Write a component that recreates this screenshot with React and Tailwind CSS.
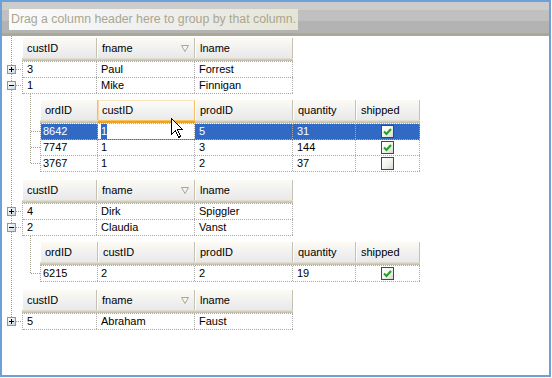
import React from 'react'

const dot = 'border-dotted border-[#a9a9a9]'

const parentCols = [
  { label: 'custID', hw: 'w-[75px]', dw: 'w-[74px]' },
  { label: 'fname', hw: 'w-[98px]', dw: 'w-[98px]', filter: true },
  { label: 'lname', hw: 'w-[98px]', dw: 'w-[98px]' },
]

const childCols = [
  { label: 'ordID', hw: 'w-[58px]', dw: 'w-[57px]' },
  { label: 'custID', hw: 'w-[97px]', dw: 'w-[97px]' },
  { label: 'prodID', hw: 'w-[98px]', dw: 'w-[98px]' },
  { label: 'quantity', hw: 'w-[63px]', dw: 'w-[63px]' },
  { label: 'shipped', hw: 'w-[64px]', dw: 'w-[64px]' },
]

function FilterIcon() {
  return (
    <svg width="8" height="7" viewBox="0 0 8 7">
      <polygon points="0.5,0.5 7.5,0.5 4,6.5" fill="#f6f5ee" stroke="#aba78f" strokeWidth="1" />
    </svg>
  )
}

function HeaderCell({ col, hot }) {
  if (hot) {
    return (
      <div className={`${col.hw} flex h-[23px] flex-col`}>
        <div className="flex flex-1 items-center border-x border-t border-l-[#fcd9a2] border-r-[#f6bf66] border-t-[#fde6bd] bg-linear-to-b from-[#fdfcf8] via-[#f2f2f2] to-[#eaeaea] pl-[3px]">
          {col.label}
        </div>
        <div className="h-px bg-[#fbc35c]" />
        <div className="h-[2px] bg-[#f1a224]" />
      </div>
    )
  }
  return (
    <div className={`${col.hw} flex h-[23px] flex-col`}>
      <div className="flex flex-1 items-center justify-between border-x border-l-white border-r-[#c5c2b1] bg-linear-to-b from-[#fcfbf3] via-[#f1f1f1] to-[#e9e9e9] pl-[4px] pr-[5px]">
        <span>{col.label}</span>
        {col.filter ? <FilterIcon /> : null}
      </div>
      <div className="h-px bg-[#e0ddcf]" />
      <div className="h-px bg-[#d1cebe]" />
      <div className="h-px bg-[#c4c1b0]" />
    </div>
  )
}

function Check({ on }) {
  return (
    <div className="flex h-[13px] w-[13px] items-center justify-center border border-[#1c5180] bg-linear-to-br from-white via-[#f3f3f0] to-[#d8d8d2]">
      {on ? (
        <svg width="11" height="11" viewBox="0 0 11 11">
          <polyline points="2,5.5 4.5,8 9,3" fill="none" stroke="#21a121" strokeWidth="2" />
        </svg>
      ) : null}
    </div>
  )
}

function ParentBand({ rows, className = '' }) {
  return (
    <div className={`ml-[20px] flex flex-col ${className}`}>
      <div className="flex">
        {parentCols.map((c) => (
          <HeaderCell key={c.label} col={c} />
        ))}
      </div>
      <div className={`w-fit border-l border-t ${dot}`}>
        {rows.map((r, i) => (
          <div key={i} className={`flex h-[16px] border-b ${dot}`}>
            {r.map((v, j) => (
              <div key={j} className={`${parentCols[j].dw} border-r ${dot} pl-[4px] leading-[15px]`}>
                {v}
              </div>
            ))}
          </div>
        ))}
      </div>
    </div>
  )
}

function ChildBand({ rows, hot = -1, className = '' }) {
  return (
    <div className={`ml-[38px] flex flex-col ${className}`}>
      <div className="flex">
        {childCols.map((c, i) => (
          <HeaderCell key={c.label} col={c} hot={i === hot} />
        ))}
      </div>
      <div className={`w-fit border-l border-t ${dot}`}>
        {rows.map((r, i) => {
          const sel = r.selected
          return (
            <div
              key={i}
              className={`flex h-[16px] border-b ${dot} ${sel ? 'bg-[#316ac5] text-white' : ''}`}
            >
              <div className={`${childCols[0].dw} border-r ${dot} pl-[2px] leading-[15px]`}>{r.ordID}</div>
              {sel ? (
                <div className={`${childCols[1].dw} border-r ${dot} bg-white pl-[3px] leading-[15px]`}>
                  <span className="inline-block h-[15px] bg-[#316ac5] text-white">{r.custID}</span>
                </div>
              ) : (
                <div className={`${childCols[1].dw} border-r ${dot} pl-[3px] leading-[15px]`}>{r.custID}</div>
              )}
              <div className={`${childCols[2].dw} border-r ${dot} pl-[4px] leading-[15px]`}>{r.prodID}</div>
              <div className={`${childCols[3].dw} border-r ${dot} pl-[4px] leading-[15px]`}>{r.quantity}</div>
              <div className={`${childCols[4].dw} flex items-center justify-center border-r ${dot}`}>
                <Check on={r.shipped} />
              </div>
            </div>
          )
        })}
      </div>
    </div>
  )
}

function Expander({ cy, open }) {
  return (
    <g>
      <rect x="7.5" y={cy - 3.5} width="8" height="8" fill="url(#exp)" stroke="#7b9ab8" />
      <rect x="9" y={cy} width="5" height="1" fill="#000" />
      {open ? null : <rect x="11" y={cy - 2} width="1" height="5" fill="#000" />}
    </g>
  )
}

function TreeLines() {
  const c = '#a19d8b'
  const dash = { stroke: c, strokeDasharray: '1 1', shapeRendering: 'crispEdges' }
  const stubs = [69, 85, 211, 227, 321]
  const kids = [131, 147, 163, 273]
  return (
    <svg className="pointer-events-none absolute left-[-2px] top-[-2px]" width="552" height="378">
      <defs>
        <linearGradient id="exp" x1="0" y1="0" x2="1" y2="1">
          <stop offset="0" stopColor="#ffffff" />
          <stop offset="1" stopColor="#c9d4df" />
        </linearGradient>
      </defs>
      <line x1="11.5" y1="36" x2="11.5" y2="321" {...dash} />
      {stubs.map((y) => (
        <line key={y} x1="16" y1={y + 0.5} x2="22" y2={y + 0.5} {...dash} />
      ))}
      <line x1="30.5" y1="94" x2="30.5" y2="164" {...dash} />
      <line x1="30.5" y1="236" x2="30.5" y2="274" {...dash} />
      {kids.map((y) => (
        <line key={y} x1="31" y1={y + 0.5} x2="40" y2={y + 0.5} {...dash} />
      ))}
      <Expander cy={69} />
      <Expander cy={85} open />
      <Expander cy={211} />
      <Expander cy={227} open />
      <Expander cy={321} />
    </svg>
  )
}

function Cursor() {
  return (
    <svg className="pointer-events-none absolute left-[169px] top-[116px]" width="14" height="22" viewBox="0 0 14 22">
      <path
        d="M0.5 0.5 L0.5 16.5 L4.5 12.5 L7.5 19.5 L9.5 18.5 L6.5 11.5 L11.5 11.5 Z"
        fill="#fff"
        stroke="#000"
        strokeWidth="1"
        shapeRendering="crispEdges"
      />
    </svg>
  )
}

export default function App() {
  return (
    <div className="relative h-[377px] w-[551px] border-2 border-[#6d9fd8] bg-white font-['Liberation_Sans',Arial,sans-serif] text-[11px] text-black">
      <div className="h-[34px] bg-[linear-gradient(#cccccc_0,#cccccc_8px,#c0c0c0_8px,#c0c0c0_19px,#b3b3b3_19px,#b3b3b3_31px,#aba894_31px)] pl-[7px] pt-[7px]">
        <div className="flex h-[21px] w-[289px] items-center bg-linear-to-r from-[#fbfbfb] via-[#efefef] to-[#e5e5d6] pl-[2px] text-[12.3px] text-[#a9a690]">
          Drag a column header here to group by that column.
        </div>
      </div>
      <div className="flex flex-col pt-[2px]">
        <ParentBand
          rows={[
            ['3', 'Paul', 'Forrest'],
            ['1', 'Mike', 'Finnigan'],
          ]}
        />
        <ChildBand
          className="mt-[6px]"
          hot={1}
          rows={[
            { ordID: '8642', custID: '1', prodID: '5', quantity: '31', shipped: true, selected: true },
            { ordID: '7747', custID: '1', prodID: '3', quantity: '144', shipped: true },
            { ordID: '3767', custID: '1', prodID: '2', quantity: '37', shipped: false },
          ]}
        />
        <ParentBand
          className="mt-[8px]"
          rows={[
            ['4', 'Dirk', 'Spiggler'],
            ['2', 'Claudia', 'Vanst'],
          ]}
        />
        <ChildBand
          className="mt-[6px]"
          rows={[{ ordID: '6215', custID: '2', prodID: '2', quantity: '19', shipped: true }]}
        />
        <ParentBand className="mt-[8px]" rows={[['5', 'Abraham', 'Faust']]} />
      </div>
      <TreeLines />
      <Cursor />
    </div>
  )
}
